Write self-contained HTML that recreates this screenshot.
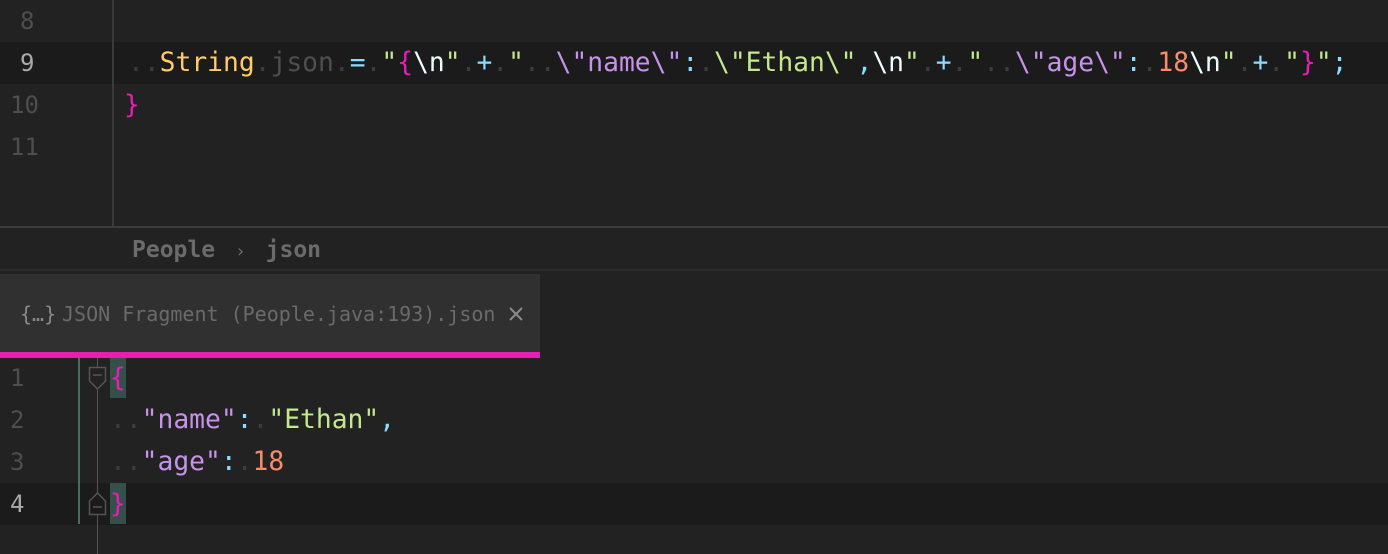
<!DOCTYPE html>
<html><head><meta charset="utf-8"><style>
body{margin:0;width:1388px;height:554px;background:#222222;position:relative;overflow:hidden;font-family:"DejaVu Sans Mono","Liberation Mono",monospace;}
.abs{position:absolute}
.row{position:absolute;left:0;width:1388px;height:42px;line-height:42px;font-size:26px;white-space:pre;letter-spacing:0.0px}
.ln{position:absolute;color:#4e4e4e;font-size:24px}
.code{position:absolute;white-space:pre}
.d{color:#3c3c3c}
.g{color:#c3e88d}.w{color:#eeffff}.p{color:#c792ea}.b{color:#89ddff}.o{color:#f78c6c}.y{color:#ffcb6b}.k{color:#e81eb4}.v{color:#4e4e4e}
</style></head><body>
<!-- top editor -->
<div class="abs" style="left:0;top:42px;width:1388px;height:42px;background:#1b1b1b"></div>
<div class="abs" style="left:112px;top:0;width:2px;height:226px;background:#3a3a3a"></div>
<div class="row" style="top:0"><span class="ln" style="left:20px">8</span></div>
<div class="row" style="top:42px"><span class="ln" style="left:20px;color:#aaa">9</span><span class="code" style="left:128px;font-size:26.3px"><span class="d">..</span><span class="y">String</span><span class="d">.</span><span class="v">json</span><span class="d">.</span><span class="b">=</span><span class="d">.</span><span class="g">"</span><span class="k">{</span><span class="w">\n</span><span class="g">"</span><span class="d">.</span><span class="b">+</span><span class="d">.</span><span class="g">"</span><span class="d">..</span><span class="p">\"name\"</span><span class="b">:</span><span class="d">.</span><span class="g">\"Ethan\"</span><span class="b">,</span><span class="w">\n</span><span class="g">"</span><span class="d">.</span><span class="b">+</span><span class="d">.</span><span class="g">"</span><span class="d">..</span><span class="p">\"age\"</span><span class="b">:</span><span class="d">.</span><span class="o">18</span><span class="w">\n</span><span class="g">"</span><span class="d">.</span><span class="b">+</span><span class="d">.</span><span class="g">"</span><span class="k">}</span><span class="g">"</span><span class="b">;</span></span></div>
<div class="row" style="top:84px"><span class="ln" style="left:10px">10</span><span class="code k" style="left:124px">}</span></div>
<div class="row" style="top:126px"><span class="ln" style="left:10px">11</span></div>
<div class="abs" style="left:0;top:226px;width:1388px;height:2px;background:#3c3c3c"></div>
<!-- breadcrumb -->
<div class="abs" style="left:132px;top:230px;height:40px;line-height:40px;font-size:23px;color:#6b6b6b;font-weight:bold">People <span style="font-weight:normal;font-size:18px;padding:0 6px">›</span> json</div>
<div class="abs" style="left:0;top:269px;width:1388px;height:2px;background:#2a2a2a"></div>
<!-- tab -->
<div class="abs" style="left:0;top:274px;width:540px;height:78px;background:#303030"></div>
<div class="abs" style="left:20px;top:294px;height:40px;line-height:40px;font-size:20px;color:#888;white-space:pre">{…}</div>
<div class="abs" style="left:62px;top:294px;height:40px;line-height:40px;font-size:20px;color:#6a6a6a;white-space:pre">JSON Fragment (People.java:193).json</div>
<svg class="abs" style="left:508px;top:306px" width="16" height="16"><path d="M2 2L14 14M14 2L2 14" stroke="#8a8a8a" stroke-width="2"/></svg>
<div class="abs" style="left:0;top:352px;width:540px;height:6px;background:#e81eb4"></div>
<!-- bottom editor -->
<div class="abs" style="left:0;top:483px;width:1388px;height:42px;background:#1b1b1b"></div>
<div class="abs" style="left:78px;top:358px;width:2px;height:166px;background:#4a6b63"></div>
<div class="abs" style="left:97px;top:358px;width:1px;height:196px;background:#555"></div>
<div class="abs" style="left:110px;top:358px;width:16px;height:40px;background:#35504b"></div>
<div class="abs" style="left:110px;top:483px;width:16px;height:41px;background:#35504b"></div>
<svg class="abs" style="left:88px;top:366px" width="20" height="26"><path d="M1.5 1.5H17.5V15L9.5 23L1.5 15Z" fill="#222" stroke="#555" stroke-width="1.5"/><path d="M5 9H14" stroke="#555" stroke-width="1.5"/></svg>
<svg class="abs" style="left:88px;top:490px" width="20" height="26"><path d="M1.5 24.5H17.5V11L9.5 3L1.5 11Z" fill="#1b1b1b" stroke="#555" stroke-width="1.5"/><path d="M5 17H14" stroke="#555" stroke-width="1.5"/></svg>
<div class="row" style="top:357px"><span class="ln" style="left:10px">1</span><span class="code k" style="left:110px">{</span></div>
<div class="row" style="top:399px"><span class="ln" style="left:10px">2</span><span class="code" style="left:110px;font-size:26.3px"><span class="d">..</span><span class="p">"name"</span><span class="b">:</span><span class="d">.</span><span class="g">"Ethan"</span><span class="b">,</span></span></div>
<div class="row" style="top:441px"><span class="ln" style="left:10px">3</span><span class="code" style="left:110px;font-size:26.3px"><span class="d">..</span><span class="p">"age"</span><span class="b">:</span><span class="d">.</span><span class="o">18</span></span></div>
<div class="row" style="top:483px"><span class="ln" style="left:10px;color:#aaa">4</span><span class="code k" style="left:110px">}</span></div>
</body></html>
